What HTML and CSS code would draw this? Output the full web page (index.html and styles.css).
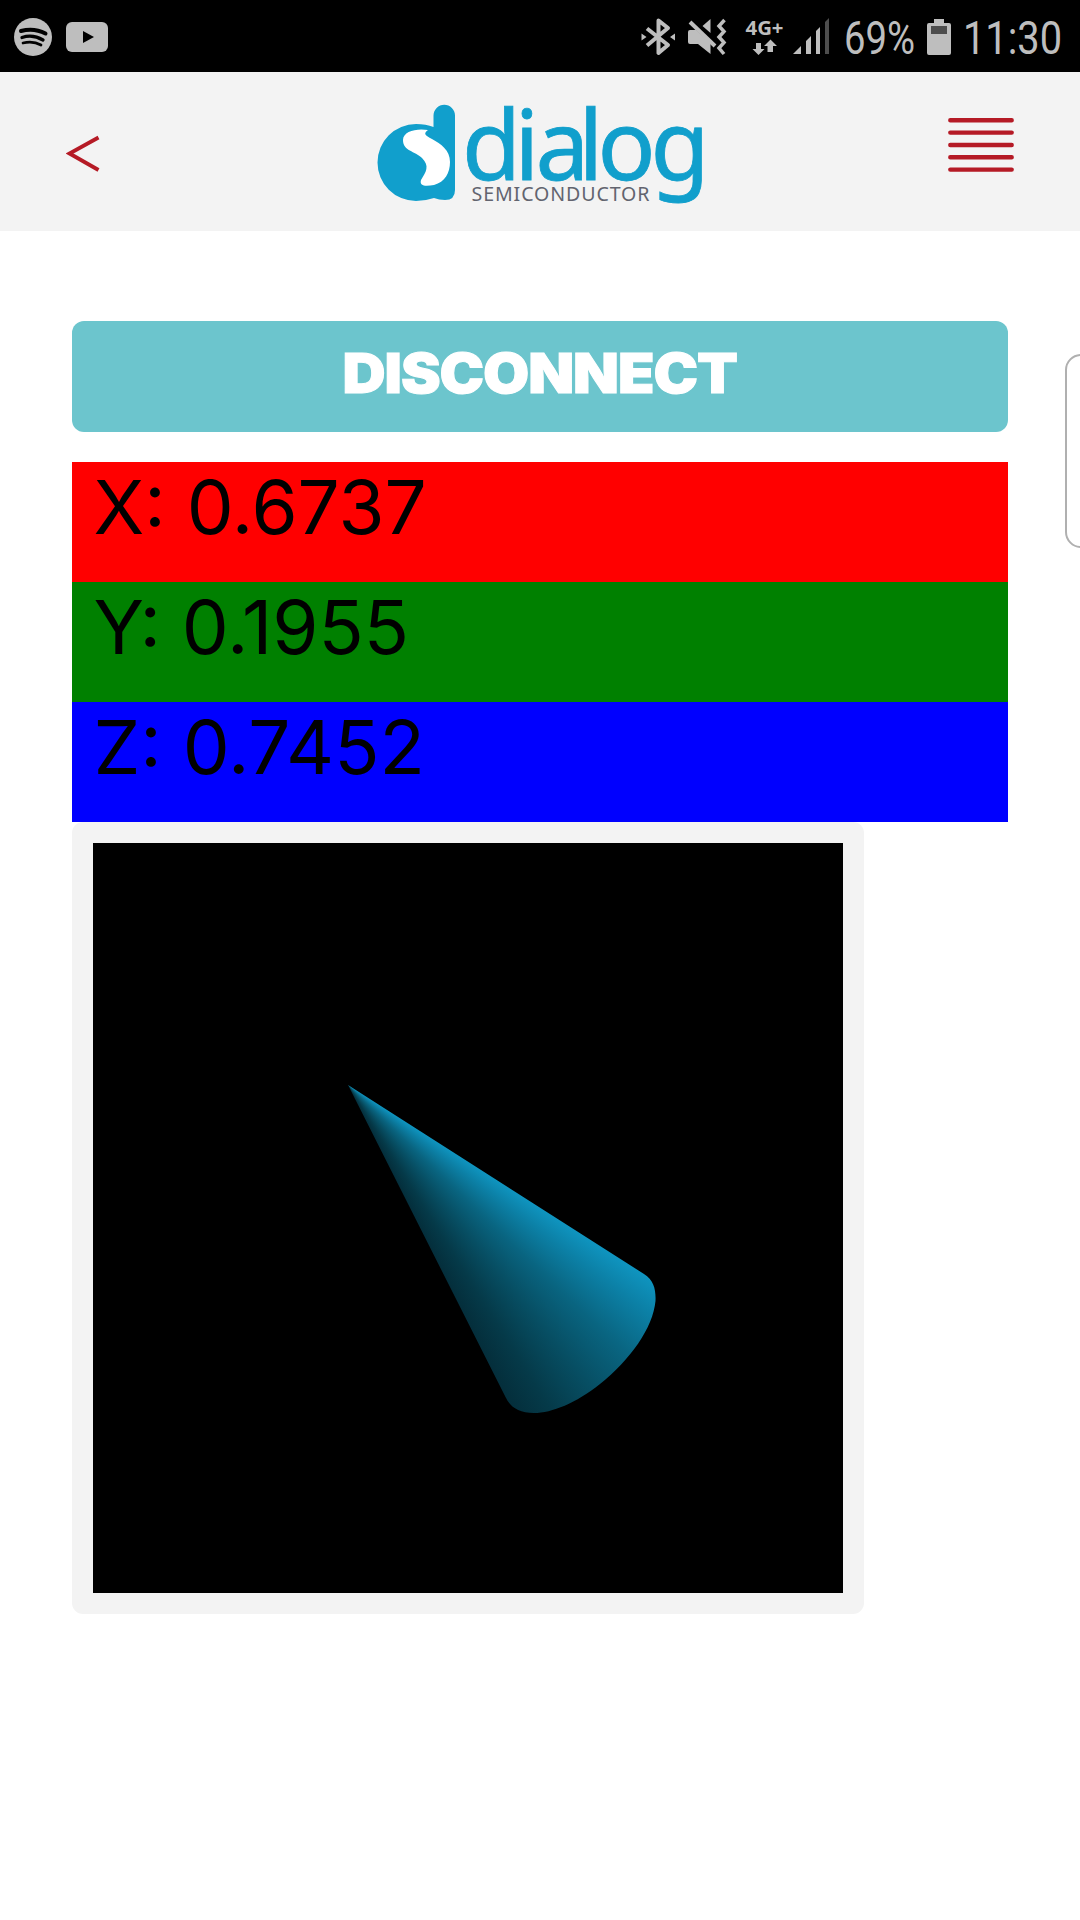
FILE: index.html
```html
<!DOCTYPE html>
<html lang="en">
<head>
<meta charset="utf-8">
<title>Dialog Semiconductor</title>
<link rel="stylesheet" href="styles.css">
</head>
<body>
<div class="status">
  <svg class="status-art" viewBox="0 0 1080 72" width="1080" height="72">
    <g fill="#bebebe">
      <circle cx="33" cy="37" r="19"/>
      <rect x="66" y="22" width="42" height="30" rx="6"/>
    </g>
    <g fill="none" stroke="#000" stroke-linecap="round">
      <path d="M21 31Q34 27.500 45.500 33.500" stroke-width="4"/>
      <path d="M22 37.500Q33 34 43 40" stroke-width="3.300"/>
      <path d="M23 43Q33 40.500 41 45" stroke-width="2.700"/>
    </g>
    <path d="M83 31v12l11-6z"/>
    <g fill="none" stroke="#bebebe" stroke-width="4">
      <path d="M647 28.500L668 45L658.500 53V20.500L668 28L647 45.500" stroke-linejoin="round"/>
      <path d="M724.500 20L719 26L724 31.500L719 37L724 42.500L719 48L724 54" stroke-width="3.500"/>
    </g>
    <g fill="#bebebe">
      <path d="M641.500 33.500v7l5-3.500zM675 33.500v7l-5-3.500zM690 30h6l14.500 13V54L698 44h-8q-2 0-2-2V32q0-2 2-2zM710.500 19v14l-8-7z"/>
      <path d="M756 43h5v6h3.500l-6 6-6-6h3.500zM767.500 52v-6H764l6.500-6.500L777 46h-4v6z"/>
      <path d="M793 54l8-8v8zM806 54V41l5-5v18zM816 54V31l4-4v27z"/>
      <path d="M934 19h10v4h5q2 0 2 2v28q0 2-2 2h-20q-2 0-2-2V25q0-2 2-2h5z"/>
    </g>
    <path d="M692 20L717 44" stroke="#000" stroke-width="3"/>
    <path d="M690 22L715 46" stroke="#bebebe" stroke-width="4"/>
    <path d="M825 54V22l4-4v36z" fill="#4d4d4d"/>
    <path d="M931 26h16v8h-16z" fill="#4d4d4d"/>
    <g class="status-text">
      <text class="network" x="745.500" y="35" textLength="38" lengthAdjust="spacingAndGlyphs">4G+</text>
      <text x="844" y="54" textLength="71" lengthAdjust="spacingAndGlyphs">69%</text>
      <text x="963" y="54" textLength="99" lengthAdjust="spacingAndGlyphs">11:30</text>
    </g>
  </svg>
</div>
<header class="header">
  <svg class="back" viewBox="0 0 34 38" width="34" height="38"><path d="M32.500 2.500L3.500 18.500L32.500 35" fill="none" stroke="#b51a25" stroke-width="3.800"/></svg>
  <svg class="logo" viewBox="360 90 360 130" width="360" height="130">
    <path fill="#119fcc" d="M433.500 127V115.500A10.700 10.700 0 0 1 455 115.500V190Q455 200 445 200Q439 200 434 198Q425 201 416 201A38.300 38.300 0 1 1 416 124Q426 124 433.500 127Z"/>
    <path fill="#fff" d="M428 130C417 128 403 131 403 140C403 151 415 151 422 158C430 166 426 172 421 180C419 187 427 186 434 185C445 182 450 173 450 162C450 150 441 144 432 139C425 135 423 134 428 130Z"/>
    <text class="logo-name" x="462 514.500 535.500 578.500 597.500 650.500" y="179.500">dialog</text>
    <text class="logo-sub" x="471.500" y="201" textLength="178">SEMICONDUCTOR</text>
  </svg>
  <svg class="menu" viewBox="0 0 66 54" width="66" height="54"><path d="M2.300 2.300H63.700M2.300 14.600H63.700M2.300 27H63.700M2.300 39.300H63.700M2.300 51.600H63.700" stroke="#b51a25" stroke-width="4.400" stroke-linecap="round"/></svg>
</header>
<main class="content">
  <button class="disconnect"><span class="disconnect-label">DISCONNECT</span></button>
  <div class="axes">
    <div class="axis axis-x">X: 0.6737</div>
    <div class="axis axis-y">Y: 0.1955</div>
    <div class="axis axis-z">Z: 0.7452</div>
  </div>
  <div class="viewer"><div class="scene"><div class="cone"></div></div></div>
</main>
<div class="edge-handle"></div>
</body>
</html>
```

FILE: styles.css
```css
* { box-sizing: border-box; }
body {
  margin: 0;
  position: relative;
  width: 1080px;
  height: 1920px;
  overflow: hidden;
  background: #fff;
  font-family: Inter, sans-serif;
}
.status { height: 72px; background: #000; }
.status-art { display: block; }
.status-text { font: 45.500px Roboto, sans-serif; fill: #bebebe; }
.network { font: 700 20px "Open Sans", sans-serif; }
.header {
  display: flex;
  justify-content: space-between;
  align-items: flex-start;
  height: 159px;
  padding: 18px 66px 0;
  background: #f3f3f3;
}
.back { margin-top: 45px; width: 34px; }
.logo { margin-left: 31px; overflow: visible; }
.menu { margin-top: 27.500px; }
.logo-name { font: 96px "Noto Sans", sans-serif; fill: #119fcc; stroke: #119fcc; stroke-width: .8px; }
.logo-sub { font: 19.600px "Noto Sans", sans-serif; fill: #62646f; }
.content { padding: 90px 72px 0; }
.disconnect {
  display: block;
  width: 100%;
  height: 111px;
  padding: 0 0 7px;
  border: 0;
  border-radius: 12px;
  background: #6cc5cd;
  color: #fff;
  font: 900 55px/1 Inter, sans-serif;
  letter-spacing: -1px;
}
.disconnect-label {
  display: inline-block;
  transform: scaleX(1.085);
  -webkit-text-stroke: 1px #fff;
}
.axes { margin-top: 30px; }
.axis {
  height: 120px;
  padding-left: 21.500px;
  font-size: 74.500px;
  line-height: 90px;
  white-space: pre;
}
.axis-x { background: #f00; }
.axis-y { background: #008000; }
.axis-z { background: #00f; }
.viewer {
  width: 792px;
  height: 792px;
  padding: 21px;
  border-radius: 11px;
  background: #f3f3f3;
}
.scene { height: 750px; background: #000; }
.cone {
  width: 750px;
  height: 750px;
  background: conic-gradient(from 0deg at 255px 242px, #0f94bf 122.650deg, #0c81a7 127deg, #096581 134deg, #074f64 141deg, #053a49 148deg, #042e3b 153.300deg);
  clip-path: path("M255 242L551 431C561 437 563 447 562.500 458C560 485 537 517 507 541C483 560 459 570 441 570C426 570 417 564 412.500 554Z");
}
.edge-handle {
  position: absolute;
  left: 1065px;
  top: 354px;
  width: 40px;
  height: 194px;
  border: 2px solid #b0b0b0;
  border-radius: 16px;
}
```
